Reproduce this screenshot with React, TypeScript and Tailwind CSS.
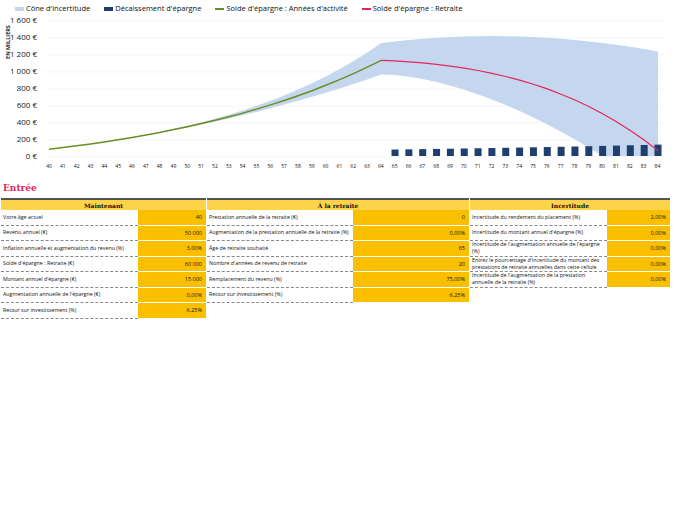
import React from "react";

const X0 = 49, DX = (658 - 49) / 44, Y0 = 142, K = 136 / 1600;
const xs = (a: number) => X0 + (a - 40) * DX;
const ys = (v: number) => Y0 - v * K;

function data() {
  const acc: [number, number][] = [];
  let b = 60;
  for (let a = 40; a <= 64; a++) { b = b * 1.0625 + 15; acc.push([a, b]); }
  const start = b;
  const ret: [number, number][] = [[64, start]];
  const bars: [number, number][] = [];
  let w = 37.5 * Math.pow(1.03, 24);
  let r = start;
  for (let a = 65; a <= 84; a++) { bars.push([a, w]); r = r * 1.0625 - w * 1.02; ret.push([a, Math.max(r, 40)]); w *= 1.03; }
  const up: [number, number][] = [], lo: [number, number][] = [];
  acc.forEach(([a, v]) => { const t = (a - 40) / 24; up.push([a, v * (1 + 0.18 * t * t)]); lo.push([a, v * (1 - 0.15 * t * t)]); });
  up[up.length - 1][1] = 1330; lo[lo.length - 1][1] = 960;
  for (let i = 1; i <= 20; i++) { const s = i / 20; up.push([64 + i, 1330 + 400 * s - 500 * s * s]); lo.push([64 + i, Math.max(0, 960 * (1 - Math.pow(s / 0.8, 1.7)))]); }
  return { acc, ret, bars, up, lo };
}

function Chart() {
  const { acc, ret, bars, up, lo } = data();
  const p = (pts: [number, number][]) => pts.map(([a, v], i) => `${i ? "L" : "M"}${xs(a).toFixed(1)},${ys(v).toFixed(1)}`).join(" ");
  const cone = p(up) + " " + [...lo].reverse().map(([a, v]) => `L${xs(a).toFixed(1)},${ys(v).toFixed(1)}`).join(" ") + " Z";
  const ticks = [0, 200, 400, 600, 800, 1000, 1200, 1400, 1600];
  const fmt = (v: number) => (v >= 1000 ? `1 ${String(v - 1000).padStart(3, "0")} €` : `${v} €`);
  return (
    <svg width="675" height="148" className="block" style={{ fontFamily: "'Open Sans', sans-serif" }}>
      {ticks.map((t) => (
        <g key={t}>
          <line x1="46" x2="665" y1={ys(t) + 1} y2={ys(t) + 1} stroke="#f0f0f0" strokeWidth="0.6" />
          <text x="37" y={ys(t) + 3} fontSize="8" textAnchor="end" fill="#222">{fmt(t)}</text>
        </g>
      ))}
      <text transform="translate(10,28) rotate(-90)" fontSize="5.5" fontWeight="bold" textAnchor="middle" fill="#222">EN MILLIERS</text>
      <path d={cone} fill="#c5d7ef" />
      {bars.map(([a, v]) => (
        <rect key={a} x={xs(a) - 3.5} y={ys(v)} width="7" height={v * K} fill="#1f3f6e" />
      ))}
      <path d={p(acc)} fill="none" stroke="#6b8e23" strokeWidth="1.5" />
      <path d={p(ret)} fill="none" stroke="#e8245c" strokeWidth="1.2" />
    </svg>
  );
}

const Hdr = ({ t }: { t: string }) => (
  <div className="h-[12px] bg-[#fdd349] border-t-2 border-[#555] flex items-center justify-center text-[6px] font-bold" style={{ fontFamily: "'DejaVu Serif', serif" }}>{t}</div>
);

function Row({ label, value, lw, vw }: { label: string; value: string; lw: number; vw: number }) {
  return (
    <div className="flex h-[15.5px]">
      <div className="flex items-center text-[5.3px] leading-[7px] px-[2px] border-b border-dashed border-[#888] bg-white" style={{ width: lw }}>{label}</div>
      <div className="flex items-center justify-end pr-[4px] text-[5.5px] bg-[#fac000] border-b border-white" style={{ width: vw }}>{value}</div>
    </div>
  );
}

function Col({ title, rows, lw, vw }: { title: string; rows: [string, string][]; lw: number; vw: number }) {
  return (
    <div style={{ width: lw + vw }} className="border-r border-white">
      <Hdr t={title} />
      {rows.map(([l, v], i) => <Row key={i} label={l} value={v} lw={lw} vw={vw} />)}
    </div>
  );
}

export default function App() {
  return (
    <div className="w-[675px] h-[520px] bg-white text-[#111] relative" style={{ fontFamily: "'Open Sans', sans-serif" }}>
      <div className="flex items-center gap-[14px] pl-[15px] pt-[3px] h-[14px] text-[7.5px]">
        <span className="flex items-center gap-[2px]"><span className="w-[9px] h-[4px] bg-[#c5d7ef]" />Cône d'incertitude</span>
        <span className="flex items-center gap-[2px]"><span className="w-[9px] h-[4px] bg-[#1f3f6e]" />Décaissement d'épargne</span>
        <span className="flex items-center gap-[2px]"><span className="w-[9px] h-[2px] bg-[#6b8e23]" />Solde d'épargne : Années d'activité</span>
        <span className="flex items-center gap-[2px]"><span className="w-[9px] h-[2px] bg-[#e8245c]" />Solde d'épargne : Retraite</span>
      </div>
      <Chart />
      <div className="flex text-[5px] pl-[46px] w-[675px] mt-[1px]">
        {Array.from({ length: 45 }, (_, i) => (
          <span key={i} className="text-center" style={{ width: DX, marginLeft: i === 0 ? -DX / 2 + 3 : 0 }}>{40 + i}</span>
        ))}
      </div>
      <div className="text-[#e8245c] font-bold text-[9px] pl-[3px] mt-[11px]" style={{ fontFamily: "'DejaVu Serif', serif" }}>Entrée</div>
      <div className="flex mt-[3px] pl-[1px]">
        <Col title="Maintenant" lw={138} vw={68} rows={[["Votre âge actuel", "40"], ["Revenu annuel (€)", "50 000"], ["Inflation annuelle et augmentation du revenu (%)", "3,00%"], ["Solde d'épargne : Retraite (€)", "60 000"], ["Montant annuel d'épargne (€)", "15 000"], ["Augmentation annuelle de l'épargne (€)", "0,00%"], ["Retour sur investissement (%)", "6,25%"]]} />
        <Col title="À la retraite" lw={147} vw={116} rows={[["Prestation annuelle de la retraite (€)", "0"], ["Augmentation de la prestation annuelle de la retraite (%)", "0,00%"], ["Âge de retraite souhaité", "65"], ["Nombre d'années de revenu de retraite", "20"], ["Remplacement du revenu (%)", "75,00%"], ["Retour sur investissement (%)", "6,25%"]]} />
        <Col title="Incertitude" lw={138} vw={63} rows={[["Incertitude du rendement du placement (%)", "2,00%"], ["Incertitude du montant annuel d'épargne (%)", "0,00%"], ["Incertitude de l'augmentation annuelle de l'épargne (%)", "0,00%"], ["Entrez le pourcentage d'incertitude du montant des prestations de retraite annuelles dans cette cellule", "0,00%"], ["Incertitude de l'augmentation de la prestation annuelle de la retraite (%)", "0,00%"]]} />
      </div>
    </div>
  );
}
